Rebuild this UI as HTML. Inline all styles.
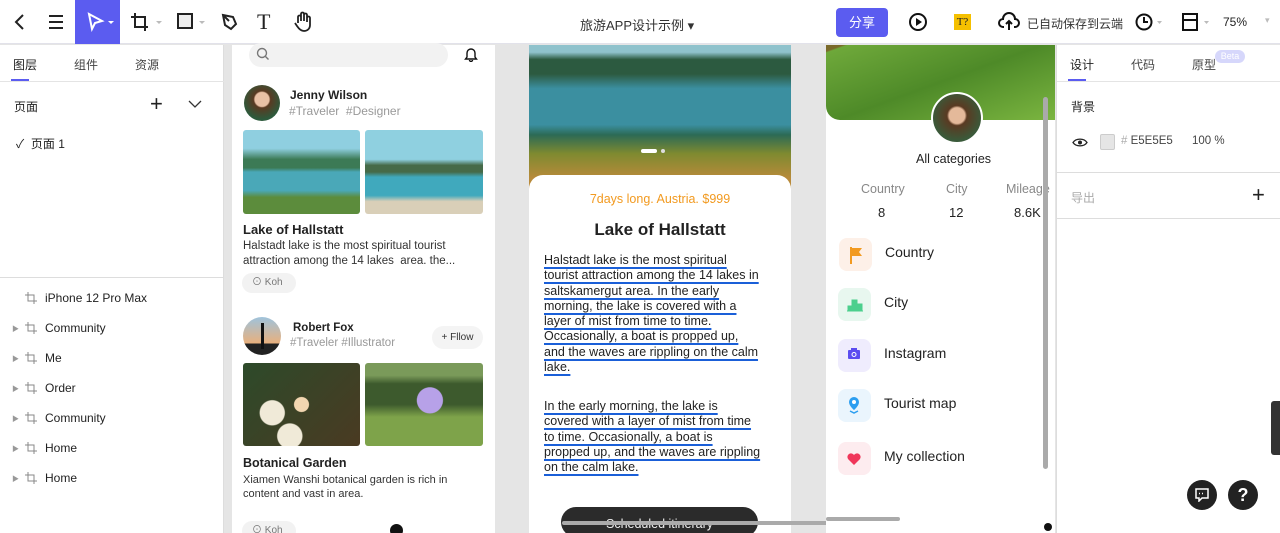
<!DOCTYPE html>
<html style="width:1280px;height:533px;overflow:hidden"><head><meta charset="utf-8"><style>
*{box-sizing:border-box;margin:0;padding:0}
body{width:1280px;height:533px;overflow:hidden;background:#e5e5e5;font-family:"Liberation Sans","Noto Sans CJK SC",sans-serif;color:#222;position:relative;font-size:12px}
.a{position:absolute}
.top{left:0;top:0;width:1280px;height:44px;background:#fff;border-bottom:1px solid #e2e2ea}
.left{left:0;top:45px;width:224px;height:488px;background:#fff;border-right:1px solid #ddd}
.right{left:1056px;top:45px;width:224px;height:488px;background:#fff;border-left:1px solid #ddd}
.card{background:#fff}
.t{position:absolute;white-space:nowrap}
.ul{text-decoration:underline;text-decoration-color:#1a5fd8;text-decoration-thickness:2px;text-underline-offset:3px}
.ly{height:30px;position:relative}
.ly svg{position:absolute;left:25px;top:1px}
</style></head><body>
<div class="a top">
 <svg class="a" style="left:10px;top:12px" width="20" height="20"><path d="M13 3 L6 10 L13 17" fill="none" stroke="#222" stroke-width="2"/></svg>
 <svg class="a" style="left:47px;top:14px" width="18" height="16"><path d="M2 2h14M2 8h14M2 14h14" stroke="#222" stroke-width="2"/></svg>
 <div class="a" style="left:75px;top:0;width:45px;height:44px;background:#5b5cf0"></div>
 <svg class="a" style="left:86px;top:12px" width="30" height="20"><path d="M3 2 L16 9 L9 11 L6 17 Z" fill="none" stroke="#fff" stroke-width="2"/><path d="M22 9h6l-3 3z" fill="#fff"/></svg>
 <svg class="a" style="left:130px;top:12px" width="36" height="20"><path d="M5 1v14h13M1 5h14v14" fill="none" stroke="#222" stroke-width="2"/><path d="M26 9h6l-3 3z" fill="#bbb"/></svg>
 <svg class="a" style="left:177px;top:13px" width="34" height="18"><rect x="1" y="1" width="14" height="14" fill="#eee" stroke="#222" stroke-width="2"/><path d="M22 8h6l-3 3z" fill="#bbb"/></svg>
 <svg class="a" style="left:220px;top:12px" width="20" height="20"><path d="M3 3 L13 5 L16 12 L11 17 L5 13 Z M3 3 L9 9" fill="none" stroke="#222" stroke-width="2"/></svg>
 <div class="t" style="left:257px;top:9px;font-size:22px;font-family:'Liberation Serif',serif">T</div>
 <svg class="a" style="left:293px;top:11px" width="20" height="22"><path d="M5 12V6a1.5 1.5 0 013 0v4V3a1.5 1.5 0 013 0v7V4a1.5 1.5 0 013 0v7V7a1.5 1.5 0 013 0v7c0 4-3 6-6 6s-5-2-7-5l-2-3" fill="none" stroke="#222" stroke-width="1.8"/></svg>
 <div class="t" style="left:580px;top:15px;font-size:13px;color:#333">旅游APP设计示例 ▾</div>
 <div class="a" style="left:836px;top:8px;width:52px;height:29px;background:#5b5cf0;border-radius:4px;color:#fff;font-size:13px;text-align:center;line-height:29px">分享</div>
 <svg class="a" style="left:908px;top:12px" width="20" height="20"><circle cx="10" cy="10" r="8" fill="none" stroke="#111" stroke-width="2"/><path d="M8 6l6 4-6 4z" fill="#111"/></svg>
 <div class="a" style="left:954px;top:14px;width:17px;height:16px;background:#f5c000;font-size:11px;text-align:center;line-height:16px;font-family:'Liberation Serif',serif">T?</div>
 <svg class="a" style="left:998px;top:12px" width="22" height="20"><path d="M6 15H5a4 4 0 010-8 6 6 0 0112 0 4 4 0 010 8h-1M11 18V9M8 12l3-3 3 3" fill="none" stroke="#111" stroke-width="2"/></svg>
 <div class="t" style="left:1027px;top:15px;font-size:12px;color:#333">已自动保存到云端</div>
 <svg class="a" style="left:1134px;top:12px" width="30" height="20"><circle cx="10" cy="10" r="7.5" fill="none" stroke="#111" stroke-width="2"/><path d="M10 5v5h4" fill="none" stroke="#111" stroke-width="2"/><path d="M23 9h5l-2.5 3z" fill="#bbb"/></svg>
 <svg class="a" style="left:1182px;top:13px" width="30" height="20"><rect x="1" y="1" width="14" height="16" fill="none" stroke="#111" stroke-width="2"/><path d="M1 7h14" stroke="#111" stroke-width="2"/><path d="M22 8h5l-2.5 3z" fill="#bbb"/></svg>
 <div class="t" style="left:1223px;top:15px;font-size:12px">75%</div>
 <div class="t" style="left:1265px;top:15px;font-size:9px;color:#bbb">▾</div>
</div>

<div class="a left">
 <div class="t" style="left:13px;top:11px;font-size:12px">图层</div>
 <div class="t" style="left:74px;top:11px;font-size:12px;color:#444">组件</div>
 <div class="t" style="left:135px;top:11px;font-size:12px;color:#444">资源</div>
 <div class="a" style="left:11px;top:34px;width:18px;height:3px;background:#5b5cf0"></div>
 <div class="a" style="left:0;top:36px;width:224px;height:1px;background:#e4e4e4"></div>
 <div class="t" style="left:14px;top:53px">页面</div>
 <div class="t" style="left:150px;top:46px;font-size:22px;font-weight:300">+</div>
 <svg class="a" style="left:188px;top:55px" width="14" height="9"><path d="M1 1l6 6 6-6" fill="none" stroke="#333" stroke-width="1.3"/></svg>
 <div class="t" style="left:16px;top:90px">✓ &nbsp;页面 1</div>
 <div class="a" style="left:0;top:232px;width:224px;height:1px;background:#ddd"></div>
 <div style="position:absolute;left:0;top:246px;width:224px;font-size:12px">
  <div class="ly"><svg width="12" height="12"><path d="M3 0v9h9M0 3h9v9" fill="none" stroke="#888"/></svg><span class="t" style="left:45px">iPhone 12 Pro Max</span></div>
  <div class="ly"><span class="t" style="left:12px;font-size:7px;color:#999;top:3px">▶</span><svg width="12" height="12"><path d="M3 0v9h9M0 3h9v9" fill="none" stroke="#888"/></svg><span class="t" style="left:45px">Community</span></div>
  <div class="ly"><span class="t" style="left:12px;font-size:7px;color:#999;top:3px">▶</span><svg width="12" height="12"><path d="M3 0v9h9M0 3h9v9" fill="none" stroke="#888"/></svg><span class="t" style="left:45px">Me</span></div>
  <div class="ly"><span class="t" style="left:12px;font-size:7px;color:#999;top:3px">▶</span><svg width="12" height="12"><path d="M3 0v9h9M0 3h9v9" fill="none" stroke="#888"/></svg><span class="t" style="left:45px">Order</span></div>
  <div class="ly"><span class="t" style="left:12px;font-size:7px;color:#999;top:3px">▶</span><svg width="12" height="12"><path d="M3 0v9h9M0 3h9v9" fill="none" stroke="#888"/></svg><span class="t" style="left:45px">Community</span></div>
  <div class="ly"><span class="t" style="left:12px;font-size:7px;color:#999;top:3px">▶</span><svg width="12" height="12"><path d="M3 0v9h9M0 3h9v9" fill="none" stroke="#888"/></svg><span class="t" style="left:45px">Home</span></div>
  <div class="ly"><span class="t" style="left:12px;font-size:7px;color:#999;top:3px">▶</span><svg width="12" height="12"><path d="M3 0v9h9M0 3h9v9" fill="none" stroke="#888"/></svg><span class="t" style="left:45px">Home</span></div>
 </div>
</div>

<!-- card 1 -->
<div class="a card" style="left:232px;top:45px;width:263px;height:488px">
 <div class="a" style="left:17px;top:-2px;width:199px;height:24px;background:#f2f2f2;border-radius:12px"></div>
 <svg class="a" style="left:24px;top:2px" width="14" height="14"><circle cx="6" cy="6" r="4.5" fill="none" stroke="#777" stroke-width="1.4"/><path d="M9.5 9.5l3 3" stroke="#777" stroke-width="1.4"/></svg>
 <svg class="a" style="left:232px;top:1px" width="14" height="16"><path d="M3 11V7a4 4 0 018 0v4l1.5 2h-11z M5.5 14a1.5 1.5 0 003 0" fill="none" stroke="#111" stroke-width="1.4"/></svg>
 <div class="a" style="left:12px;top:40px;width:36px;height:36px;border-radius:50%;background:radial-gradient(circle at 50% 40%,#e9c1a5 0 25%,#5a3a22 30%,#2d5a3c 70%)"></div>
 <div class="t" style="left:58px;top:43px;font-weight:bold;font-size:12px">Jenny Wilson</div>
 <div class="t" style="left:57px;top:59px;color:#999;font-size:12px">#Traveler &nbsp;#Designer</div>
 <div class="a" style="left:11px;top:85px;width:117px;height:84px;border-radius:3px;background:linear-gradient(#8fcfe0 0 22%,#3c7a55 35% 45%,#4aa8b8 50% 72%,#5c8c3c 80%)"></div>
 <div class="a" style="left:133px;top:85px;width:118px;height:84px;border-radius:3px;background:linear-gradient(#8fd0e0 0 35%,#466a48 42% 50%,#40a9bd 56% 78%,#d9cfb8 85%)"></div>
 <div class="t" style="left:11px;top:177px;font-weight:bold;font-size:13px">Lake of Hallstatt</div>
 <div class="t" style="left:11px;top:194px;font-size:11.5px;color:#333;line-height:15px">Halstadt lake is the most spiritual tourist<br>attraction among the 14 lakes &nbsp;area. the...</div>
 <div class="a" style="left:10px;top:228px;width:54px;height:20px;background:#f2f2f2;border-radius:10px;font-size:10px;color:#777;line-height:20px;padding-left:10px">⊙ Koh</div>
 <div class="a" style="left:11px;top:272px;width:38px;height:38px;border-radius:50%;background:linear-gradient(#9fc3dc,#e9b07c 70%,#222 70%)"></div>
 <div class="a" style="left:29px;top:278px;width:3px;height:26px;background:#111"></div>
 <div class="t" style="left:61px;top:277px;font-weight:bold;font-size:11.5px">Robert Fox</div>
 <div class="t" style="left:58px;top:292px;color:#999;font-size:11.5px">#Traveler #Illustrator</div>
 <div class="a" style="left:200px;top:281px;width:51px;height:23px;background:#f4f4f4;border-radius:12px;font-size:10px;line-height:23px;text-align:center;color:#333">+ Fllow</div>
 <div class="a" style="left:11px;top:318px;width:117px;height:83px;border-radius:3px;background:radial-gradient(circle at 50% 50%,#f2d6b0 0 10%,transparent 11%),radial-gradient(circle at 25% 60%,#f0ead8 0 12%,transparent 13%),radial-gradient(circle at 40% 88%,#f0ead8 0 12%,transparent 13%),linear-gradient(135deg,#2d4a2a,#4a3a22)"></div>
 <div class="a" style="left:133px;top:318px;width:118px;height:83px;border-radius:3px;background:radial-gradient(circle at 55% 45%,#b7a1e8 0 16%,transparent 17%),linear-gradient(#7a9a5a 0 15%,#3d5a2d 25% 50%,#7ea34a 65%)"></div>
 <div class="t" style="left:11px;top:411px;font-weight:bold;font-size:12.5px">Botanical Garden</div>
 <div class="t" style="left:11px;top:428px;font-size:11px;color:#333;line-height:14px">Xiamen Wanshi botanical garden is rich in<br>content and vast in area.</div>
 <div class="a" style="left:10px;top:476px;width:54px;height:20px;background:#f2f2f2;border-radius:10px;font-size:10px;color:#777;line-height:20px;padding-left:10px">⊙ Koh</div>
 <div class="a" style="left:158px;top:479px;width:13px;height:13px;border-radius:50%;background:#111"></div>
</div>

<!-- card 2 -->
<div class="a card" style="left:529px;top:45px;width:262px;height:488px">
 <div class="a" style="left:0;top:0;width:262px;height:145px;background:linear-gradient(#8fc2cc 0 5%,#2c5a40 10% 20%,#3b8fa0 30% 55%,#2c6a55 62%,#7f8a30 75%,#b88a3a 92%)"></div>
 <div class="a" style="left:112px;top:104px;width:16px;height:4px;border-radius:2px;background:#fff"></div>
 <div class="a" style="left:132px;top:104px;width:4px;height:4px;border-radius:2px;background:#ddd"></div>
 <div class="a" style="left:0;top:130px;width:262px;height:358px;background:#fff;border-radius:14px 14px 0 0"></div>
 <div class="t" style="left:0;width:262px;text-align:center;top:147px;color:#f29a20;font-size:12.5px">7days long. Austria. $999</div>
 <div class="t" style="left:0;width:262px;text-align:center;top:175px;font-size:17px;font-weight:bold">Lake of Hallstatt</div>
 <div class="t ul" style="left:15px;top:208px;font-size:12.5px;line-height:15.3px;color:#222">Halstadt lake is the most spiritual<br>tourist attraction among the 14 lakes in<br>saltskamergut area. In the early<br>morning, the lake is covered with a<br>layer of mist from time to time.<br>Occasionally, a boat is propped up,<br>and the waves are rippling on the calm<br>lake.</div>
 <div class="t ul" style="left:15px;top:354px;font-size:12.5px;line-height:15.3px;color:#222">In the early morning, the lake is<br>covered with a layer of mist from time<br>to time. Occasionally, a boat is<br>propped up, and the waves are rippling<br>on the calm lake.</div>
 <div class="a" style="left:32px;top:462px;width:197px;height:30px;border-radius:15px;background:#2b2b2b;color:#eee;text-align:center;font-size:12.5px;line-height:35px">Scheduled itinerary</div>
</div>
<div class="a" style="left:562px;top:521px;width:338px;height:4px;background:#aaa;border-radius:2px"></div>

<!-- card 3 -->
<div class="a card" style="left:826px;top:45px;width:229px;height:488px">
 <div class="a" style="left:0;top:0;width:229px;height:75px;border-radius:0 0 0 14px;background:linear-gradient(160deg,#7a6a2a 0 4%,#6ea83a 5%,#4e8a28 50%,#7bb540 100%)"></div>
 <div class="a" style="left:105px;top:47px;width:52px;height:52px;border-radius:50%;border:2px solid #fff;background:radial-gradient(circle at 50% 45%,#e4b99a 0 22%,#5a3a22 28%,#3a5a3a 70%)"></div>
 <div class="t" style="left:90px;top:107px;font-size:12.5px">All categories</div>
 <div class="t" style="left:35px;top:137px;color:#888;font-size:12.5px">Country</div>
 <div class="t" style="left:120px;top:137px;color:#888;font-size:12.5px">City</div>
 <div class="t" style="left:180px;top:137px;color:#888;font-size:12.5px">Mileage</div>
 <div class="t" style="left:52px;top:160px;font-size:13px">8</div>
 <div class="t" style="left:123px;top:160px;font-size:13px">12</div>
 <div class="t" style="left:188px;top:160px;font-size:13px">8.6K</div>
 <div class="a" style="left:13px;top:193px;width:33px;height:33px;border-radius:8px;background:#fdf0e8"></div>
 <svg class="a" style="left:22px;top:200px" width="16" height="20"><path d="M3 2v17" stroke="#f29a20" stroke-width="2"/><path d="M3 3h11l-3 4 3 4H3z" fill="#f29a20"/></svg>
 <div class="t" style="left:59px;top:199px;font-size:14px">Country</div>
 <div class="a" style="left:12px;top:243px;width:33px;height:33px;border-radius:8px;background:#e8f7ef"></div>
 <svg class="a" style="left:20px;top:252px" width="18" height="15"><path d="M1 14h16M2 14V9h3v5M6 14V3h5v11M12 14V7h4v7" fill="#4ccf8d" stroke="#4ccf8d"/></svg>
 <div class="t" style="left:58px;top:249px;font-size:14px">City</div>
 <div class="a" style="left:12px;top:294px;width:33px;height:33px;border-radius:8px;background:#efecfd"></div>
 <svg class="a" style="left:21px;top:302px" width="14" height="13"><rect x="1" y="3" width="12" height="9" rx="1" fill="#5b4cf0"/><rect x="4" y="1" width="6" height="3" fill="#5b4cf0"/><circle cx="7" cy="7.5" r="2" fill="none" stroke="#fff"/></svg>
 <div class="t" style="left:58px;top:300px;font-size:14px">Instagram</div>
 <div class="a" style="left:12px;top:344px;width:33px;height:33px;border-radius:8px;background:#eaf5fd"></div>
 <svg class="a" style="left:21px;top:351px" width="14" height="18"><path d="M7 1a5 5 0 015 5c0 4-5 8-5 8s-5-4-5-8a5 5 0 015-5z" fill="#2c9ef0"/><circle cx="7" cy="6" r="2" fill="#fff"/><path d="M3 15l4 2 4-2" fill="none" stroke="#2c9ef0" stroke-width="1.5"/></svg>
 <div class="t" style="left:58px;top:350px;font-size:14px">Tourist map</div>
 <div class="a" style="left:12px;top:397px;width:33px;height:33px;border-radius:8px;background:#fdecef"></div>
 <svg class="a" style="left:20px;top:406px" width="16" height="15"><path d="M8 14L2 8a3.5 3.5 0 016-4 3.5 3.5 0 016 4z" fill="#f0365a"/></svg>
 <div class="t" style="left:58px;top:403px;font-size:14px">My collection</div>
 <div class="a" style="left:217px;top:52px;width:5px;height:372px;background:#aaa;border-radius:3px"></div>
 <div class="a" style="left:0;top:472px;width:74px;height:4px;background:#aaa;border-radius:2px"></div>
 <div class="a" style="left:218px;top:478px;width:8px;height:8px;border-radius:50%;background:#111"></div>
</div>

<div class="a right">
 <div class="t" style="left:13px;top:11px">设计</div>
 <div class="t" style="left:74px;top:11px;color:#444">代码</div>
 <div class="t" style="left:135px;top:11px;color:#444">原型</div>
 <div class="a" style="left:158px;top:5px;width:30px;height:13px;border-radius:7px;background:#d6d7fb;color:#fff;font-size:9px;text-align:center;line-height:13px">Beta</div>
 <div class="a" style="left:11px;top:34px;width:18px;height:3px;background:#5b5cf0"></div>
 <div class="a" style="left:0;top:36px;width:224px;height:1px;background:#e4e4e4"></div>
 <div class="t" style="left:14px;top:53px">背景</div>
 <svg class="a" style="left:15px;top:92px" width="16" height="11"><path d="M1 5.5C4 1 12 1 15 5.5 12 10 4 10 1 5.5z" fill="none" stroke="#222" stroke-width="1.3"/><circle cx="8" cy="5.5" r="2" fill="#222"/></svg>
 <div class="a" style="left:43px;top:89px;width:15px;height:16px;background:#e5e5e5;border:1px solid #ccc;border-radius:2px"></div>
 <div class="t" style="left:64px;top:90px;color:#444;font-size:11.5px"><span style="color:#aaa">#</span> E5E5E5</div>
 <div class="t" style="left:135px;top:90px;color:#444;font-size:11.5px">100 %</div>
 <div class="a" style="left:0;top:127px;width:224px;height:1px;background:#ddd"></div>
 <div class="t" style="left:14px;top:144px;color:#aaa">导出</div>
 <div class="t" style="left:195px;top:137px;font-size:22px;font-weight:300">+</div>
 <div class="a" style="left:0;top:173px;width:224px;height:1px;background:#ddd"></div>
 <div class="a" style="left:214px;top:356px;width:10px;height:54px;background:#333;border-radius:3px 0 0 3px"></div>
 <div class="a" style="left:130px;top:435px;width:30px;height:30px;border-radius:50%;background:#222"></div>
 <svg class="a" style="left:137px;top:443px" width="16" height="14"><path d="M2 1h12v9H8l-3 3v-3H2z" fill="none" stroke="#fff" stroke-width="1.5"/><path d="M5 5.5h1M8 5.5h1M11 5.5h0" stroke="#fff" stroke-width="1.5"/></svg>
 <div class="a" style="left:171px;top:435px;width:30px;height:30px;border-radius:50%;background:#222;color:#fff;font-weight:bold;font-size:18px;text-align:center;line-height:30px">?</div>
</div>
</body></html>
